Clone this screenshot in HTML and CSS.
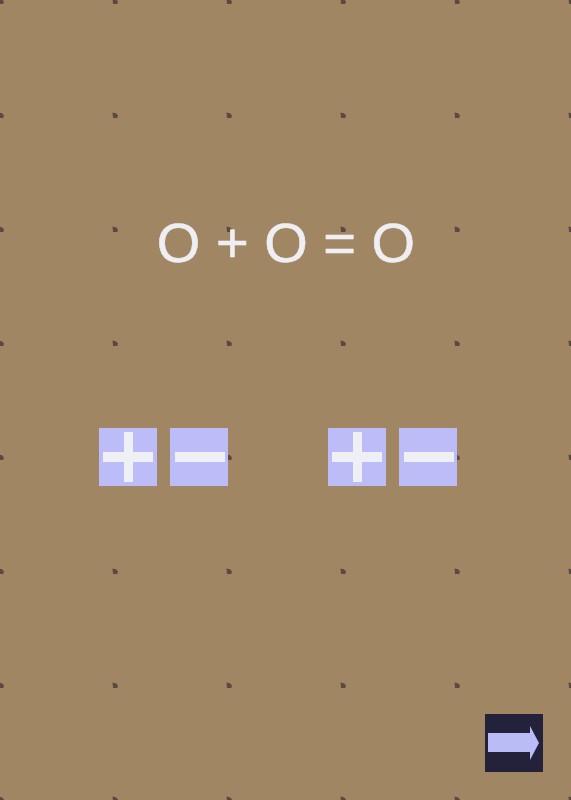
FILE: index.html
```html
<!DOCTYPE html>
<html lang="en">
<head>
<meta charset="utf-8">
<title>Sum puzzle</title>
<link rel="stylesheet" href="styles.css">
</head>
<body>
<main class="stage">
  <div class="equation">O + O = O</div>
  <div class="controls">
    <div class="group">
      <button class="key" aria-label="plus">
        <svg viewBox="0 0 58 58" width="58" height="58"><rect x="4" y="24" width="50" height="10"/><rect x="25" y="4" width="9" height="50"/></svg>
      </button>
      <button class="key" aria-label="minus">
        <svg viewBox="0 0 58 58" width="58" height="58"><rect x="5" y="24" width="50" height="10"/></svg>
      </button>
    </div>
    <div class="group">
      <button class="key" aria-label="plus">
        <svg viewBox="0 0 58 58" width="58" height="58"><rect x="4" y="24" width="50" height="10"/><rect x="25" y="4" width="9" height="50"/></svg>
      </button>
      <button class="key" aria-label="minus">
        <svg viewBox="0 0 58 58" width="58" height="58"><rect x="5" y="24" width="50" height="10"/></svg>
      </button>
    </div>
  </div>
  <button class="next" aria-label="next">
    <svg viewBox="0 0 58 58" width="58" height="58"><polygon points="3,19 45,19 45,12 54,29 45,46 45,38 3,38"/></svg>
  </button>
</main>
</body>
</html>
```
FILE: styles.css
```css
html, body {
  margin: 0;
  padding: 0;
}
body {
  background-color: #a08662;
  background-image: url("data:image/svg+xml;utf8,<svg xmlns='http://www.w3.org/2000/svg' width='114' height='114'><polygon points='54.5,54.5 58,55.3 60,57.5 59.3,60 55,60' fill='%235b4943'/></svg>");
  background-size: 114px 114px;
  background-position: -56px -56px;
  font-family: "Liberation Sans", Arial, sans-serif;
}
.stage {
  width: 571px;
  height: 800px;
  display: flex;
  flex-direction: column;
  box-sizing: border-box;
}
.equation {
  margin-top: 215px;
  font-size: 56px;
  line-height: 56px;
  color: #eeeef3;
  -webkit-text-stroke: 0.6px #eeeef3;
  text-align: center;
  padding-left: 1px;
  white-space: pre;
}
.controls {
  margin-top: 157px;
  display: flex;
  gap: 100px;
  padding-left: 99px;
}
.group {
  display: flex;
  gap: 13px;
}
.key {
  width: 58px;
  height: 58px;
  padding: 0;
  border: 0;
  background: #bcbdf8;
  display: block;
}
.key svg {
  display: block;
  fill: #eef0f6;
}
.next {
  margin-top: auto;
  margin-bottom: 28px;
  margin-right: 28px;
  align-self: flex-end;
  width: 58px;
  height: 58px;
  padding: 0;
  border: 0;
  background: #24213a;
  display: block;
}
.next svg {
  display: block;
  fill: #babcf8;
}
```
